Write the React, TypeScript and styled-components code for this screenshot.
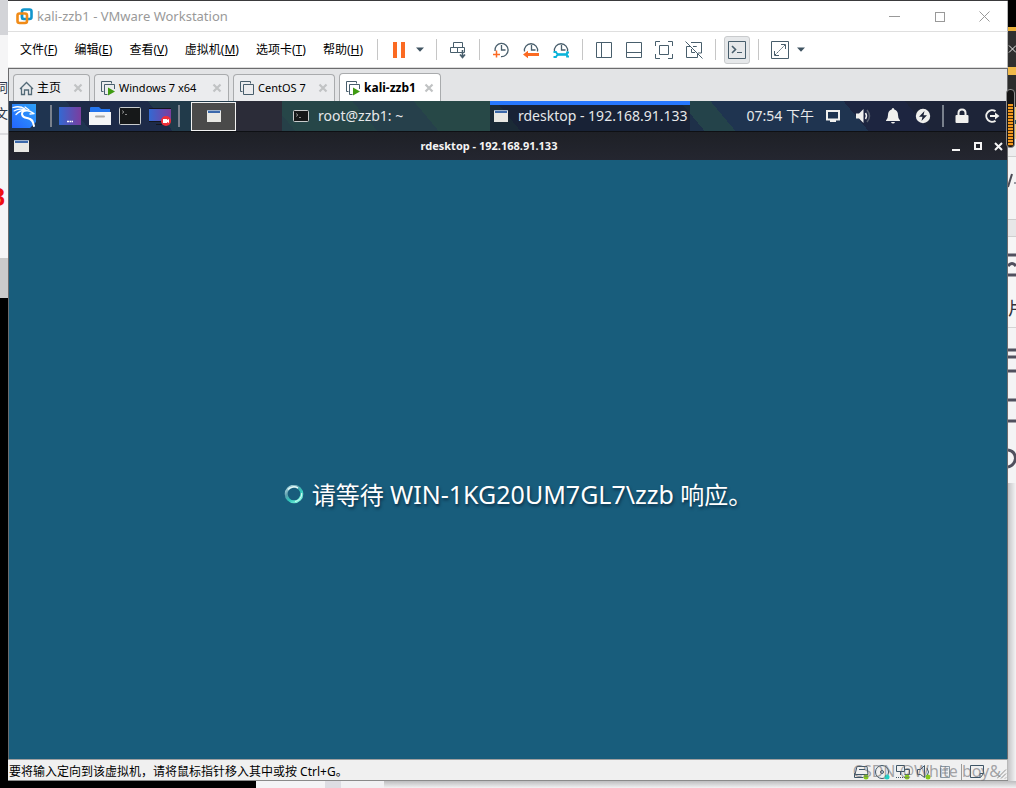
import React from "react";
import styled, { createGlobalStyle, css } from "styled-components";

const GlobalStyle = createGlobalStyle`
  *, *::before, *::after { box-sizing: border-box; }
  body {
    margin: 0;
    font-family: "Noto Sans", "Noto Sans CJK SC", sans-serif;
    font-size: 12px;
    line-height: 16px;
    color: #000;
    background: #f4f4f5;
  }
  button { font: inherit; color: inherit; border: 0; padding: 0; margin: 0; background: none; }
`;

/* ---------- desktop behind the window ---------- */

const Desktop = styled.div`
  min-height: 100vh;
  display: grid;
  grid-template-columns: 8px minmax(0, 1fr) 8px;
  grid-template-rows: minmax(0, 1fr) 7px;
  overflow: hidden;
`;

const Edge = styled.div`
  display: flex;
  flex-direction: column;
  overflow: hidden;
  min-height: 0;
`;

const Block = styled.div<{ $h?: number; $bg: string; $align?: string; $inset?: number }>`
  flex: ${(p) => (p.$h ? `0 0 ${p.$h}px` : "1 0 0")};
  padding-right: ${(p) => p.$inset ?? 0}px;
  background: ${(p) => p.$bg};
  display: flex;
  align-items: center;
  justify-content: ${(p) => p.$align ?? "flex-end"};
  overflow: hidden;
`;

const EdgeText = styled.span<{ $size: number; $color: string; $bold?: boolean }>`
  font-family: "Liberation Sans", "Noto Sans CJK SC", sans-serif;
  font-size: ${(p) => p.$size}px;
  font-weight: ${(p) => (p.$bold ? 700 : 400)};
  color: ${(p) => p.$color};
  line-height: 24px;
  white-space: nowrap;
`;

const BottomStrip = styled.div`
  grid-column: 1 / -1;
  display: flex;
  background: linear-gradient(#bdbdbf, #f1f1f2);
`;

const StripPart = styled.div<{ $w: number; $bg: string }>`
  flex: 0 0 ${(p) => p.$w}px;
  background: ${(p) => p.$bg};
`;

/* ---------- VMware window ---------- */

const Window = styled.main`
  position: relative;
  display: flex;
  flex-direction: column;
  min-width: 0;
  background: #fff;
  border-top: 1px solid #3a3a3c;
  border-bottom: 1px solid #8a8a8a;
`;

const TitleBar = styled.header`
  flex: 0 0 31px;
  display: flex;
  align-items: center;
  gap: 4px;
  padding-left: 8px;
  border-bottom: 1px solid #dfdfdf;
  border-right: 1px solid #b8b8b8;
  color: #999;
`;

const WindowTitle = styled.h1`
  flex: 1;
  margin: 0;
  font-size: 13px;
  font-weight: 400;
  white-space: nowrap;
`;

const CaptionButtons = styled.div`
  display: flex;
`;

const CaptionButton = styled.button`
  width: 45px;
  height: 28px;
  display: grid;
  place-items: center;
`;

const MenuBar = styled.div`
  flex: 0 0 36px;
  display: flex;
  align-items: center;
  border-bottom: 1px solid #dcdcdc;
  border-right: 1px solid #b8b8b8;
`;

const Menu = styled.nav`
  flex: 0 0 369px;
  display: flex;
  gap: 17px;
  padding-left: 12px;
  white-space: nowrap;
`;

const MenuItem = styled.button`
  height: 20px;
  line-height: 20px;
`;

const ToolGroup = styled.div`
  display: flex;
  align-items: center;
  height: 21px;
  padding: 0 6px;
  border-left: 1px solid #c6c6c6;
`;

const ToolButton = styled.button<{ $pressed?: boolean }>`
  width: 30px;
  height: 28px;
  display: grid;
  place-items: center;
  color: #485e6c;
  ${(p) =>
    p.$pressed &&
    css`
      width: 26px;
      margin: 0 2px;
      background: #e6e8ea;
      border: 1px solid #c9cbcd;
      border-radius: 3px;
    `}
`;

const CaretButton = styled.button<{ $spaced?: boolean }>`
  width: 12px;
  height: 20px;
  display: grid;
  place-items: center;
  margin-right: ${(p) => (p.$spaced ? 4 : 0)}px;
`;

const Content = styled.div`
  flex: 1;
  display: flex;
  flex-direction: column;
  border: solid #6c6c6e;
  border-width: 1px 1px 0 1px;
`;

const TabStrip = styled.div`
  flex: 0 0 32px;
  display: flex;
  align-items: flex-end;
  gap: 4px;
  padding-left: 4px;
  background: #e3e4e6;
`;

const Tab = styled.div<{ $w: number; $active?: boolean }>`
  width: ${(p) => p.$w}px;
  height: ${(p) => (p.$active ? 28 : 27)}px;
  display: flex;
  align-items: center;
  padding: 0 6px 0 5px;
  border: 1px solid #a9abad;
  border-bottom: 0;
  border-radius: 4px 4px 0 0;
  background: ${(p) => (p.$active ? "#fff" : "#ebecee")};
  font-weight: ${(p) => (p.$active ? 700 : 400)};
`;

const TabLabel = styled.button<{ $small?: boolean }>`
  flex: 1;
  display: flex;
  align-items: center;
  gap: 3px;
  text-align: left;
  white-space: nowrap;
  font-size: ${(p) => (p.$small ? 11 : 12)}px;
  font-weight: inherit;
`;

const TabClose = styled.button`
  width: 10px;
  height: 14px;
  display: grid;
  place-items: center;
`;

/* ---------- Kali guest desktop ---------- */

const Panel = styled.div`
  flex: 0 0 31px;
  display: flex;
  align-items: center;
  color: #e6e8ea;
  font-size: 14px;
  border-bottom: 1px solid #0e1014;
  background: linear-gradient(
    50deg,
    #1f3450 0 8%,
    #1d2a48 8% 16%,
    #213a4a 16% 28%,
    #22434a 28% 36%,
    #213a4e 36% 42%,
    #234648 42% 50%,
    #1e3049 50% 68%,
    #24434a 68% 71%,
    #1f3450 71% 84%,
    #1d2540 84% 90%,
    #1d2438 90%
  );
`;

const Launchers = styled.div`
  flex: 0 0 182px;
  display: flex;
  align-items: center;
  padding-left: 3px;
`;

const Launcher = styled.button<{ $logo?: boolean }>`
  width: ${(p) => (p.$logo ? 24 : 30)}px;
  height: 28px;
  display: grid;
  place-items: center;
`;

const PanelRule = styled.span<{ $left: number; $right: number }>`
  flex: none;
  width: 2px;
  height: 22px;
  margin: 0 ${(p) => p.$right}px 0 ${(p) => p.$left}px;
  background: #79818d;
`;

const Workspace = styled.button<{ $current?: boolean }>`
  flex: 0 0 ${(p) => (p.$current ? 45 : 46)}px;
  height: ${(p) => (p.$current ? 29 : 30)}px;
  display: grid;
  place-items: center;
  background: ${(p) => (p.$current ? "#4a4a4a" : "#2b2c38")};
  border: ${(p) => (p.$current ? "1px solid #f2f2f2" : "0")};
`;

const Task = styled.button<{ $active?: boolean }>`
  flex: 0 0 ${(p) => (p.$active ? 200 : 208)}px;
  height: 30px;
  display: flex;
  align-items: center;
  gap: ${(p) => (p.$active ? 10 : 9)}px;
  padding: ${(p) => (p.$active ? "0 0 4px 4px" : "0 0 0 11px")};
  border-top: ${(p) => (p.$active ? "4px solid #2777ff" : "0")};
  background: ${(p) => (p.$active ? "rgba(22, 28, 44, 0.65)" : "rgba(50, 80, 70, 0.3)")};
  white-space: nowrap;
`;

const Tray = styled.div`
  margin-left: auto;
  display: flex;
  align-items: center;
`;

const Clock = styled.time`
  margin-right: 4px;
  white-space: nowrap;
`;

const TrayButton = styled.button`
  width: 30px;
  height: 28px;
  display: grid;
  place-items: center;
  color: #f0f0ee;
`;

const GuestTitle = styled.div`
  flex: 0 0 28px;
  display: flex;
  align-items: center;
  padding-left: 5px;
  background: linear-gradient(#1e2026, #242630);
  color: #f4f4f4;
`;

const GuestName = styled.h2`
  flex: 1;
  margin: 0;
  padding-left: 4px;
  text-align: center;
  font-size: 11px;
  font-weight: 700;
`;

const GuestButton = styled.button`
  width: 22px;
  height: 20px;
  display: grid;
  place-items: center;
  &:last-child { width: 18px; }
`;

const Remote = styled.section`
  flex: 1;
  display: flex;
  align-items: center;
  justify-content: center;
  gap: 8px;
  padding: 70px 0 0 20px;
  background: #185d7c;
`;

const Waiting = styled.p`
  margin: 0;
  font-size: 24px;
  line-height: 32px;
  color: #fff;
  text-shadow: 1px 2px 3px rgba(0, 20, 40, 0.6);
  white-space: nowrap;
`;

const Account = styled.span`
  font-size: 25px;
`;

const StatusBar = styled.footer`
  position: relative;
  flex: 0 0 21px;
  display: flex;
  align-items: center;
  justify-content: space-between;
  padding: 3px 0 0 1px;
  background: #f0f0f0;
  border-top: 1px solid #a0a0a0;
  border-right: 1px solid #b8b8b8;
`;

const Hint = styled.span`
  white-space: nowrap;
`;

const Devices = styled.div`
  display: flex;
  align-items: center;
  color: #3e5566;
`;

const Watermark = styled.span`
  position: absolute;
  right: 6px;
  top: 0;
  font-size: 16px;
  line-height: 22px;
  color: rgba(110, 110, 115, 0.6);
  white-space: nowrap;
`;

const Meter = styled.div`
  position: absolute;
  top: 88px;
  right: -7px;
  width: 9px;
  height: 59px;
  padding: 14px 1px 1px;
  border: 1px solid #8d8d8d;
  border-radius: 4px;
  background: #151515;
`;

const MeterFill = styled.div`
  height: 100%;
  background: repeating-linear-gradient(#f39a1f 0 2px, #4a2c05 2px 3px);
`;

/* ---------- drawings ---------- */

type IconProps = { w?: number; h?: number; children: React.ReactNode; sharp?: boolean; color?: string };

const Icon = ({ w = 20, h = 20, children, sharp, color = "currentColor" }: IconProps) => (
  <svg
    width={w}
    height={h}
    viewBox={`0 0 ${w} ${h}`}
    fill="none"
    stroke={color}
    strokeWidth="1"
    shapeRendering={sharp ? "crispEdges" : undefined}
    aria-hidden="true"
  >
    {children}
  </svg>
);

const Caret = () => (
  <Icon w={8} h={5}>
    <path d="M0 0.5h8L4 4.8z" fill="#3f5361" stroke="none" />
  </Icon>
);

const ClockFace = ({ children }: { children: React.ReactNode }) => (
  <Icon>
    <path d="M3.500 11.500A6.600 6.600 0 1 1 16.500 11.500" strokeWidth="1.300" />
    <path d="M10.500 5v5h4" strokeWidth="1.300" />
    {children}
  </Icon>
);

const VmIcon = ({ running }: { running?: boolean }) => (
  <Icon w={16} h={16} color="#485e6c">
    <path d="M3.500 11.500h-2v-10h10v2" />
    <path d="M14.500 9V4.500h-10v10h3" />
    {running ? <path d="M8 7.500v8l7-4z" fill="#3f9b12" stroke="none" /> : <path d="M7 14.500h7.500V8" />}
  </Icon>
);

const CloseMark = () => (
  <Icon w={10} h={10}>
    <path d="M1.500 1.500l7 7M8.500 1.500l-7 7" stroke="#c1c3c4" strokeWidth="2.200" />
  </Icon>
);

const MiniWindow = ({ w = 15, h = 12 }: { w?: number; h?: number }) => (
  <Icon w={w} h={h} sharp>
    <rect x="0" y="0" width={w} height={h} fill="#e8e8e4" stroke="none" />
    <rect x="0" y="0" width={w} height="1" fill="#9cb2cc" stroke="none" />
    <rect x="1" y="1" width={w - 2} height="2" fill="#3c69ab" stroke="none" />
  </Icon>
);

const Terminal = ({ w, h }: { w: number; h: number }) => (
  <Icon w={w} h={h}>
    <rect x="0.500" y="0.500" width={w - 1} height={h - 1} rx="1" fill="#161819" stroke="#c9cccd" />
    <path d="M3 3.500l2 1.500-2 1.500M6 7.500h2" stroke="#888" />
  </Icon>
);

const VmwareLogo = () => (
  <Icon w={17} h={17}>
    <rect x="6" y="1.500" width="9.500" height="9.500" rx="2" stroke="#1195cc" strokeWidth="2.600" />
    <rect x="1.500" y="5.500" width="9.500" height="9.500" rx="2" stroke="#f08b18" strokeWidth="2.600" />
    <path d="M6 7v3q0 1 1 1h2" stroke="#1195cc" strokeWidth="2.200" />
  </Icon>
);

const KaliLogo = () => (
  <svg width="24" height="24" viewBox="0 0 24 24" aria-hidden="true">
    <defs>
      <linearGradient id="kali" x1="1" y1="0" x2="0" y2="1">
        <stop offset="0" stopColor="#2ea2f8" />
        <stop offset="1" stopColor="#2465ff" />
      </linearGradient>
    </defs>
    <path d="M0 0h24v18l-6 6H0z" fill="url(#kali)" />
    <g fill="none" stroke="#fff" strokeLinecap="round" strokeLinejoin="round">
      <path d="M1 3.500Q8 1.500 13 5" strokeWidth="1.300" />
      <path d="M2 7Q8 3.500 14 6.500" strokeWidth="1.100" />
      <path d="M4 10.500Q8 6 13 6.500Q17 6 22 9.500L18 10" strokeWidth="1.400" />
      <path d="M14 6.500Q10 7 10 10Q10.500 13.500 15 14Q21 15 22 22" strokeWidth="2" />
      <path d="M15 14Q19 14 21 17" strokeWidth="1.200" />
      <path d="M13 3L17 6" strokeWidth="1.200" />
    </g>
  </svg>
);

const Screen = ({ recording }: { recording?: boolean }) => (
  <Icon w={24} h={20}>
    <defs>
      <linearGradient id="screen" x1="0" y1="0" x2="1" y2="0">
        <stop offset="0" stopColor="#3369d2" />
        <stop offset="1" stopColor="#7c3d9e" />
      </linearGradient>
    </defs>
    <rect x="1" y={recording ? 2 : 1} width="22" height={recording ? 13 : 18} fill="url(#screen)" stroke="none" />
    {recording ? (
      <>
        <path d="M1 2.500h22M1 15.500h12M8 18.500h6" stroke="#14161e" />
        <circle cx="18" cy="15" r="5" fill="#ef2e38" stroke="none" />
        <path d="M15 13h4v1l2-1v4l-2-1v1h-4z" fill="#fff" stroke="none" />
      </>
    ) : (
      <path d="M9 15.500h2M11.500 15.500h2M14 15.500h1" stroke="#fff" strokeWidth="1.500" />
    )}
  </Icon>
);

const Folder = () => (
  <Icon w={22} h={20}>
    <path d="M1 8V2q0-1 1-1h8l2 2h9v5z" fill="#2475ee" stroke="none" />
    <path d="M0 6h22v13H0z" fill="#f5f5f7" stroke="none" />
    <path d="M7 10.500h8" stroke="#aaa" strokeWidth="2" strokeLinecap="round" />
  </Icon>
);

const Spinner = () => (
  <svg width="20" height="20" viewBox="0 0 20 20" fill="none" aria-hidden="true">
    <defs>
      <linearGradient id="ring" x1="0" y1="0" x2="0.800" y2="1">
        <stop offset="0" stopColor="#bfe6ea" />
        <stop offset="0.350" stopColor="#5f9fae" />
        <stop offset="0.650" stopColor="#2fc5b9" />
        <stop offset="1" stopColor="#7ff5dc" />
      </linearGradient>
    </defs>
    <circle cx="10" cy="9" r="7.800" stroke="url(#ring)" strokeWidth="3" />
    <path d="M4 4.500A7.800 7.800 0 0 1 14 3" stroke="#e4f8f8" strokeWidth="1.500" />
    <path d="M17.700 8A7.800 7.800 0 0 1 11 16.500" stroke="#d6fff4" strokeWidth="1" />
  </svg>
);

const Dot = ({ x, y = 13, color = "#86c81c" }: { x: number; y?: number; color?: string }) => (
  <circle cx={x} cy={y} r="2.500" fill={color} stroke="none" />
);

/* ---------- content ---------- */

const menus: [string, string][] = [
  ["文件", "F"],
  ["编辑", "E"],
  ["查看", "V"],
  ["虚拟机", "M"],
  ["选项卡", "T"],
  ["帮助", "H"],
];

export default function App() {
  return (
    <>
      <GlobalStyle />
      <Desktop>
        <Edge>
          <Block $h={35} $bg="#d3d4d8" />
          <Block $h={40} $bg="#f5f5f6" />
          <Block $h={26} $bg="#f5f5f6"><EdgeText $size={13} $color="#2c3648">词</EdgeText></Block>
          <Block $h={26} $bg="#f5f5f6"><EdgeText $size={13} $color="#2c3648">文</EdgeText></Block>
          <Block $h={6} $bg="#f5f5f6" />
          <Block $h={2} $bg="#dcdcdf" />
          <Block $h={123} $bg="#f6f6f7" $inset={3}><EdgeText $size={26} $color="#f00f12" $bold>8</EdgeText></Block>
          <Block $h={40} $bg="#cbcbcb" />
          <Block $bg="#000" />
        </Edge>

        <Window>
          <TitleBar>
            <VmwareLogo />
            <WindowTitle>kali-zzb1 - VMware Workstation</WindowTitle>
            <CaptionButtons>
              <CaptionButton aria-label="最小化"><Icon w={11} h={11} sharp><path d="M0 5.500h11" /></Icon></CaptionButton>
              <CaptionButton aria-label="最大化"><Icon w={11} h={11} sharp><path d="M1 1.500h9.500v9H1z" /></Icon></CaptionButton>
              <CaptionButton aria-label="关闭"><Icon w={11} h={11}><path d="M.5.5l10 10M10.500.5l-10 10" /></Icon></CaptionButton>
            </CaptionButtons>
          </TitleBar>

          <MenuBar>
            <Menu>
              {menus.map(([name, key]) => (
                <MenuItem key={key}>{name}(<u>{key}</u>)</MenuItem>
              ))}
            </Menu>
            <ToolGroup>
              <ToolButton aria-label="挂起">
                <Icon><path d="M4 2h4v16H4zM12 2h4v16h-4z" fill="#fb6a22" stroke="none" /></Icon>
              </ToolButton>
              <CaretButton $spaced aria-label="电源选项"><Caret /></CaretButton>
            </ToolGroup>
            <ToolGroup>
              <ToolButton aria-label="发送按键">
                <Icon>
                  <path d="M5.500 7.500v-5h9v5M2.500 7.500h7v5h-7zM9.500 7.500h7v5h-7z" />
                  <path d="M14.500 10v7M12 14.500l2.500 3 2.500-3" strokeWidth="1.600" />
                </Icon>
              </ToolButton>
            </ToolGroup>
            <ToolGroup>
              <ToolButton aria-label="拍摄快照">
                <Icon>
                  <path d="M4 11A6.600 6.600 0 1 1 10 16.600" strokeWidth="1.300" />
                  <path d="M10.500 5v5h4" strokeWidth="1.300" />
                  <path d="M5.500 10.500v7M2 14.500h7" stroke="#fb6a22" strokeWidth="1.500" />
                </Icon>
              </ToolButton>
              <ToolButton aria-label="恢复快照">
                <ClockFace><path d="M2 14.500l5-3.800V13h11v3H7v2.300z" fill="#fb6a22" stroke="none" /></ClockFace>
              </ToolButton>
              <ToolButton aria-label="管理快照">
                <ClockFace>
                  <path d="M6 14.500h10" stroke="#0bb3d9" strokeWidth="2.600" />
                  <path d="M2.500 12H5l1.500 2.500L5 17H2.500M18 12.500h-2v4h2" stroke="#0bb3d9" strokeWidth="1.800" />
                </ClockFace>
              </ToolButton>
            </ToolGroup>
            <ToolGroup>
              <ToolButton aria-label="显示库"><Icon><path d="M2.500 2.500h15v15h-15zM7.500 2.500v15" /></Icon></ToolButton>
              <ToolButton aria-label="缩略图栏"><Icon><path d="M2.500 2.500h15v15h-15zM2.500 12.500h15" /></Icon></ToolButton>
              <ToolButton aria-label="全屏">
                <Icon><path d="M5.500 5.500h9v9h-9zM1.500 6V1.500H6M14 1.500h4.500V6M18.500 14v4.500H14M6 18.500H1.500V14" /></Icon>
              </ToolButton>
              <ToolButton aria-label="Unity">
                <Icon><path d="M7 2.500h10.500V13H14M6 6.500H2.500v11h11V14M12.500 7v-.5H9M7.500 12.500V9M7.500 12.500H11M1.500 1.500l17 17" /></Icon>
              </ToolButton>
            </ToolGroup>
            <ToolGroup>
              <ToolButton $pressed aria-label="控制台">
                <Icon>
                  <path d="M1.500 1.500h17v17h-17z" />
                  <path d="M5 6l3.500 3.500L5 13" strokeWidth="1.600" />
                  <path d="M10 12.500h5" />
                </Icon>
              </ToolButton>
            </ToolGroup>
            <ToolGroup>
              <ToolButton aria-label="拉伸">
                <Icon><path d="M1.500 1.500h17v17h-17zM11 4.500h4.500V9M4.500 11v4.500H9" /><path d="M5 15L15 5" strokeDasharray="2 1" /></Icon>
              </ToolButton>
              <CaretButton aria-label="拉伸选项"><Caret /></CaretButton>
            </ToolGroup>
          </MenuBar>

          <Content>
            <TabStrip>
              <Tab $w={77}>
                <TabLabel>
                  <Icon w={15} h={15}><path d="M1 8l6.500-6.500L14 8M2.500 7v6.500h3V9h4v4.500h3V7" strokeWidth="1.300" stroke="#546b78" /></Icon>
                  主页
                </TabLabel>
                <TabClose aria-label="关闭主页"><CloseMark /></TabClose>
              </Tab>
              <Tab $w={135}>
                <TabLabel $small><VmIcon running />Windows 7 x64</TabLabel>
                <TabClose aria-label="关闭 Windows 7 x64"><CloseMark /></TabClose>
              </Tab>
              <Tab $w={102}>
                <TabLabel $small><VmIcon />CentOS 7</TabLabel>
                <TabClose aria-label="关闭 CentOS 7"><CloseMark /></TabClose>
              </Tab>
              <Tab $w={102} $active>
                <TabLabel><VmIcon running />kali-zzb1</TabLabel>
                <TabClose aria-label="关闭 kali-zzb1"><CloseMark /></TabClose>
              </Tab>
            </TabStrip>

            <Panel>
              <Launchers>
                <Launcher $logo aria-label="应用程序"><KaliLogo /></Launcher>
                <PanelRule $left={14} $right={3} />
                <Launcher aria-label="显示桌面"><Screen /></Launcher>
                <Launcher aria-label="文件"><Folder /></Launcher>
                <Launcher aria-label="终端"><Terminal w={22} h={18} /></Launcher>
                <Launcher aria-label="录屏"><Screen recording /></Launcher>
                <PanelRule $left={3} $right={0} />
              </Launchers>
              <Workspace $current aria-label="工作区 1"><MiniWindow w={14} h={12} /></Workspace>
              <Workspace aria-label="工作区 2" />
              <Task><Terminal w={16} h={12} />root@zzb1: ~</Task>
              <Task $active><MiniWindow w={14} h={12} />rdesktop - 192.168.91.133</Task>
              <Tray>
                <Clock>07:54 下午</Clock>
                <TrayButton aria-label="显示器">
                  <Icon w={16} h={14}><path d="M2 2h12v8.500H2zM5 12h6" strokeWidth="2" /></Icon>
                </TrayButton>
                <TrayButton aria-label="音量">
                  <Icon w={16} h={16}>
                    <path d="M1 5.500h3L8.500 1v14L4 10.500H1z" fill="currentColor" stroke="none" />
                    <path d="M10.500 5q2 3 0 6" strokeWidth="1.500" />
                    <path d="M12 2q5 6 0 12" stroke="#59606e" strokeWidth="1.500" />
                  </Icon>
                </TrayButton>
                <TrayButton aria-label="通知">
                  <Icon w={16} h={16}>
                    <path d="M8 0q1.300 0 1.300 1.500Q13 2.500 13 7q0 4 2 5.500V13H1v-.5Q3 11 3 7q0-4.500 3.700-5.500Q6.700 0 8 0zM6 14h4q-.5 1.500-2 1.500T6 14z" fill="currentColor" stroke="none" />
                  </Icon>
                </TrayButton>
                <TrayButton aria-label="电源">
                  <Icon w={16} h={16}>
                    <circle cx="8" cy="8" r="7.200" fill="currentColor" stroke="none" />
                    <path d="M9.500 3L4 8.700h3.500L6.500 13 12 7.300H8.500z" fill="#1d2438" stroke="none" />
                  </Icon>
                </TrayButton>
                <PanelRule $left={4} $right={3} />
                <TrayButton aria-label="锁定">
                  <Icon w={14} h={16}>
                    <rect x="0.500" y="7" width="13" height="8" rx="1" fill="currentColor" stroke="none" />
                    <path d="M3.500 8V5q0-3.500 3.500-3.500T10.500 5v3" strokeWidth="2" />
                  </Icon>
                </TrayButton>
                <TrayButton aria-label="注销">
                  <Icon w={16} h={16}>
                    <path d="M11.500 3.300A5.800 5.800 0 1 0 11.500 12.700" strokeWidth="2" />
                    <path d="M6 8h6" strokeWidth="2" />
                    <path d="M11 4.500L15.500 8 11 11.500z" fill="currentColor" stroke="none" />
                  </Icon>
                </TrayButton>
              </Tray>
            </Panel>

            <GuestTitle>
              <MiniWindow w={15} h={12} />
              <GuestName>rdesktop - 192.168.91.133</GuestName>
              <GuestButton aria-label="最小化"><Icon w={10} h={10} sharp><path d="M1 9h8" strokeWidth="2" /></Icon></GuestButton>
              <GuestButton aria-label="最大化"><Icon w={8} h={8} sharp><path d="M1 1h6v6H1z" strokeWidth="2" /></Icon></GuestButton>
              <GuestButton aria-label="关闭"><Icon w={9} h={9}><path d="M1 1l7 7M8 1L1 8" strokeWidth="2" /></Icon></GuestButton>
            </GuestTitle>

            <Remote>
              <Spinner />
              <Waiting>请等待 <Account>WIN-1KG20UM7GL7\zzb</Account> 响应。</Waiting>
            </Remote>
          </Content>

          <StatusBar>
            <Hint>要将输入定向到该虚拟机，请将鼠标指针移入其中或按 Ctrl+G。</Hint>
            <Devices>
              <Icon w={21} h={16}><path d="M4 2.500h10l1 8H2zM1.500 9v4.500h9M6 5.500h6" /><Dot x={13} /></Icon>
              <Icon w={21} h={16}><circle cx="8" cy="8" r="6.500" /><circle cx="8" cy="8" r="1.500" /><Dot x={13} color="#20d0c4" /></Icon>
              <Icon w={21} h={16}><path d="M1.500 1.500h8v6h-8zM5.500 8v3M9.500 5.500h5v5h-5" /><path d="M1 13.500h9" strokeDasharray="1 1" /><Dot x={12} /></Icon>
              <Icon w={21} h={16}><path d="M1.500 5.500h3l4-4v12l-4-3h-3zM11 4q3 4 0 8" /><Dot x={12} /></Icon>
              <Icon w={24} h={16}><path d="M3.500 2.500h9v11h-9zM5 6h6M5 9h6" stroke="#8a98a4" /></Icon>
              <Icon w={8} h={16}><path d="M.5 0v16" stroke="#9a9a9a" /></Icon>
              <Icon w={28} h={16}><path d="M1.500 1.500h13v8l-3 4h-10zM11 13V9.500h3.500" /></Icon>
              <Icon w={10} h={16}><path d="M0 14.500l9-9M4 14.500l5-5M8 14.500l1-1" stroke="#8f8f8f" /></Icon>
            </Devices>
            <Watermark>CSDN @White boy&amp;</Watermark>
          </StatusBar>

          <Meter><MeterFill /></Meter>
        </Window>

        <Edge>
          <Block $h={27} $bg="#000" />
          <Block $h={4} $bg="#eab03a" />
          <Block $h={36} $bg="#303030" $align="center">
            <Icon w={8} h={8}><path d="M1 .5l7 7M8 .5l-7 7" stroke="#e8e8e8" /></Icon>
          </Block>
          <Block $h={8} $bg="#f0b94a" />
          <Block $h={32} $bg="#2c2c2c" />
          <Block $h={13} $bg="#f6d27c" />
          <Block $h={4} $bg="#305a58" />
          <Block $h={15} $bg="#f6d27c" />
          <Block $h={17} $bg="#ededee" />
          <Block $h={1} $bg="#cfcfcf" />
          <Block $h={62} $bg="#f4f4f4" $align="flex-start">
            <Icon w={8} h={30}><path d="M4 1L0 14" stroke="#4b4b55" strokeWidth="2" /><path d="M6 10h2" stroke="#9a9aa2" strokeWidth="2" /></Icon>
          </Block>
          <Block $h={1} $bg="#cccccc" />
          <Block $h={16} $bg="#e7e7e8" />
          <Block $h={1} $bg="#cfcfcf" />
          <Block $h={54} $bg="#f6f6f6" $align="flex-start">
            <Icon w={8} h={28}><path d="M0 5h8M0 25h8M0 16q4-5 8 0" stroke="#50505e" strokeWidth="3" /></Icon>
          </Block>
          <Block $h={36} $bg="#f6f6f6" $align="flex-start"><EdgeText $size={18} $color="#33333d">片</EdgeText></Block>
          <Block $h={1} $bg="#d4d4d4" />
          <Block $h={155} $bg="#f4f4f5" $align="flex-start">
            <Icon w={8} h={130}>
              <path d="M0 9h8M0 16h8M0 30h8M0 59h8M0 80h8" stroke="#50505e" strokeWidth="3" />
              <path d="M0 109q7 1 7.500 8.500-1 7-7.500 8.500" stroke="#50505e" strokeWidth="3" />
            </Icon>
          </Block>
          <Block $bg="linear-gradient(90deg, #c4c4c6, #f4f4f5)" />
        </Edge>

        <BottomStrip>
          <StripPart $w={256} $bg="#000" />
          <StripPart $w={69} $bg="#f4f4f6" />
          <StripPart $w={16} $bg="#dddde3" />
          <StripPart $w={43} $bg="#f1f1f3" />
        </BottomStrip>
      </Desktop>
    </>
  );
}
